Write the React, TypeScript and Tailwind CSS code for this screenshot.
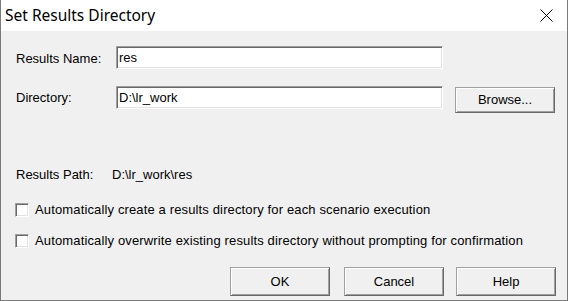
import React from 'react';

const ui = { fontFamily: '"Liberation Sans", Arial, sans-serif' };

function Sunken({ className = '', children }: { className?: string; children?: React.ReactNode }) {
  return (
    <div
      className={`bg-white border border-t-[#a0a0a0] border-l-[#a0a0a0] border-b-white border-r-white shadow-[inset_1px_1px_0_#696969,inset_-1px_-1px_0_#e3e3e3] ${className}`}
    >
      {children}
    </div>
  );
}

function Button({ label, className = '' }: { label: string; className?: string }) {
  return (
    <button
      className={`w-[100px] bg-[#f0f0f0] text-[13px] text-black border border-t-[#a0a0a0] border-l-[#a0a0a0] border-b-[#696969] border-r-[#696969] shadow-[inset_1px_1px_0_#fff,inset_-1px_-1px_0_#a0a0a0] flex items-center justify-center ${className}`}
      style={ui}
    >
      {label}
    </button>
  );
}

function Check({ label, className = '' }: { label: string; className?: string }) {
  return (
    <div className={`flex items-center h-[16px] ${className}`}>
      <Sunken className="w-[14px] h-[14px] -ml-[1px]" />
      <span className="ml-[6px] text-[13px] leading-[16px] tracking-[0.14px] text-black">{label}</span>
    </div>
  );
}

export default function App() {
  return (
    <div className="w-[568px] h-[301px] bg-[#f0f0f0] border border-t-0 border-[#7a7a7a] flex flex-col overflow-hidden" style={ui}>
      {/* Title bar */}
      <div className="h-[31px] bg-white flex items-center justify-between shrink-0">
        <span
          className="pl-[4px] pt-[1px] text-[15.5px] text-black"
          style={{ fontFamily: '"Noto Sans", "Noto Sans CJK SC", sans-serif' }}
        >
          Set Results Directory
        </span>
        <svg width="13" height="13" viewBox="0 0 13 13" className="mr-[14px]">
          <path d="M0.5 0.5 L12.5 12.5 M12.5 0.5 L0.5 12.5" stroke="#000" strokeWidth="1" />
        </svg>
      </div>

      {/* Content */}
      <div className="flex flex-col pl-[15px] pr-[11px] text-[13px] text-black">
        <div className="mt-[15px] flex items-center h-[23px]">
          <span className="w-[100px] pt-[3px]">Results Name:</span>
          <Sunken className="w-[327px] h-[23px] pl-[2px] flex items-center">res</Sunken>
        </div>

        <div className="mt-[17px] flex items-start">
          <span className="w-[100px] h-[23px] flex items-center">Directory:</span>
          <Sunken className="w-[327px] h-[23px] pl-[2px] flex items-center">D:\lr_work</Sunken>
          <Button label="Browse..." className="ml-[12px] mt-[1px] h-[26px]" />
        </div>

        <div className="mt-[54px] flex items-center h-[16px] leading-[16px]">
          <span className="w-[96px]">Results Path:</span>
          <span>D:\lr_work\res</span>
        </div>

        <Check className="mt-[19px]" label="Automatically create a results directory for each scenario execution" />
        <Check className="mt-[15px]" label="Automatically overwrite existing results directory without prompting for confirmation" />

        <div className="mt-[18px] flex justify-end">
          <Button label="OK" className="h-[29px]" />
          <Button label="Cancel" className="ml-[14px] h-[29px]" />
          <Button label="Help" className="ml-[12px] h-[29px]" />
        </div>
      </div>
    </div>
  );
}
